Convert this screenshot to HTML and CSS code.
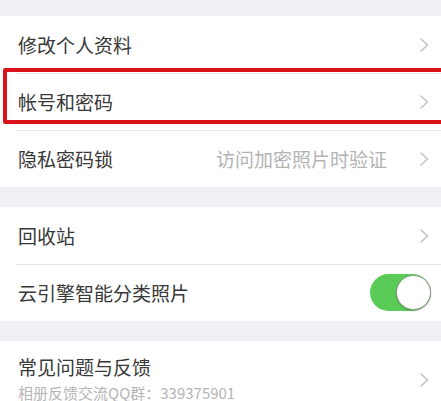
FILE: index.html
```html
<!DOCTYPE html>
<html lang="zh-CN">
<head>
<meta charset="utf-8">
<link rel="stylesheet" href="styles.css">
</head>
<body>
<div class="page">
  <div class="group">
    <div class="row">
      <span class="title">修改个人资料</span>
      <svg class="chev" viewBox="0 0 9 14"><polyline points="1,1 7.5,7 1,13"/></svg>
    </div>
    <div class="row sep highlighted">
      <span class="title">帐号和密码</span>
      <svg class="chev" viewBox="0 0 9 14"><polyline points="1,1 7.5,7 1,13"/></svg>
      <div class="mark"></div>
    </div>
    <div class="row sep">
      <span class="title">隐私密码锁</span>
      <span class="value">访问加密照片时验证</span>
      <svg class="chev" viewBox="0 0 9 14"><polyline points="1,1 7.5,7 1,13"/></svg>
    </div>
  </div>
  <div class="group">
    <div class="row">
      <span class="title">回收站</span>
      <svg class="chev" viewBox="0 0 9 14"><polyline points="1,1 7.5,7 1,13"/></svg>
    </div>
    <div class="row sep">
      <span class="title">云引擎智能分类照片</span>
      <div class="toggle"><div class="knob"></div></div>
    </div>
  </div>
  <div class="group last">
    <div class="row tall">
      <div class="texts">
        <span class="title">常见问题与反馈</span>
        <span class="sub">相册反馈交流QQ群：339375901</span>
      </div>
      <svg class="chev" viewBox="0 0 9 14"><polyline points="1,1 7.5,7 1,13"/></svg>
    </div>
  </div>
</div>
</body>
</html>
```
FILE: styles.css
```css
html, body {
  margin: 0;
  padding: 0;
}
body {
  background: #efeff4;
  font-family: "Noto Sans CJK SC", "Noto Sans", sans-serif;
  overflow: hidden;
}
.page {
  padding-top: 16px;
}
.group {
  background: #fff;
  margin-bottom: 20px;
}
.group.last {
  margin-bottom: 0;
}
.row {
  position: relative;
  display: flex;
  align-items: center;
  height: 57px;
  box-sizing: border-box;
  padding: 0 12px 0 18px;
}
.row.sep::before {
  content: "";
  position: absolute;
  top: 0;
  left: 16px;
  right: 0;
  height: 1px;
  background: #e6e6ea;
}
.title {
  font-size: 19px;
  line-height: 26px;
  color: #383838;
  flex: 1;
}
.value {
  font-size: 19px;
  line-height: 26px;
  color: #b3b3b3;
  margin-right: 33px;
}
.chev {
  width: 9px;
  height: 14px;
  fill: none;
  stroke: #c4c4c8;
  stroke-width: 1.6;
  stroke-linecap: round;
  stroke-linejoin: round;
}
.mark {
  position: absolute;
  left: 3px;
  right: -10px;
  top: -5px;
  bottom: 6px;
  border: 4px solid #d8141c;
  border-radius: 2px;
}
.toggle {
  width: 61px;
  height: 37px;
  border-radius: 19px;
  background: #5bcb58;
  display: flex;
  justify-content: flex-end;
  align-items: center;
  margin-right: -2px;
}
.knob {
  width: 33px;
  height: 33px;
  border-radius: 50%;
  background: #fff;
  border: 1.5px solid #8e9a88;
  box-shadow: 0 1px 2px rgba(0,0,0,0.2);
}
.row.tall {
  height: 61px;
  padding-top: 13px;
  padding-bottom: 0;
  align-items: flex-start;
}
.row.tall .chev {
  margin-top: 19px;
}
.texts {
  flex: 1;
  display: flex;
  flex-direction: column;
  gap: 4px;
}
.sub {
  font-size: 15px;
  line-height: 18px;
  color: #b5b5b5;
}
```
